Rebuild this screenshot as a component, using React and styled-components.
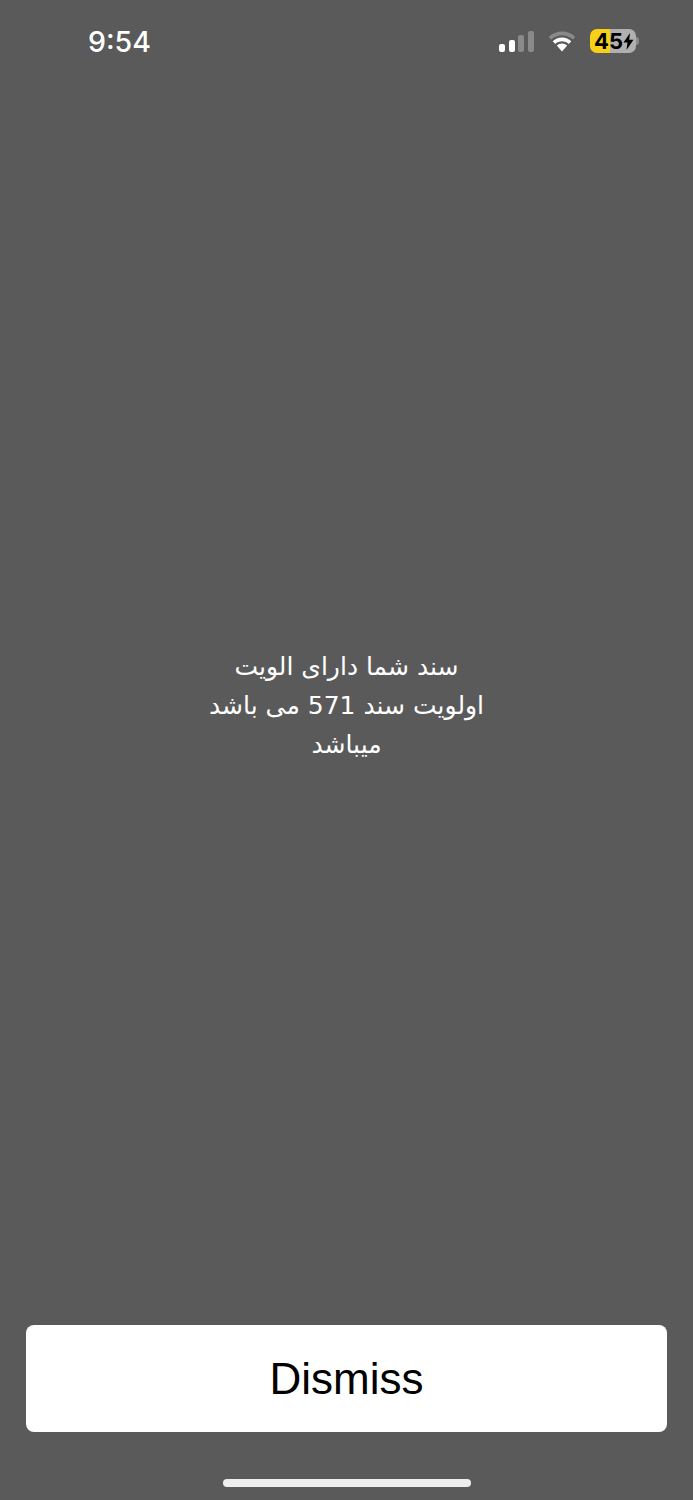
import styled, { createGlobalStyle } from "styled-components";

const GlobalStyle = createGlobalStyle`
  html, body {
    margin: 0;
    padding: 0;
    background-color: #5a5a5a;
  }
`;

const signalBars = [
  { height: 8, on: true },
  { height: 12, on: true },
  { height: 17, on: false },
  { height: 21, on: false },
];

const App = () => {
  return (
    <Wrapper>
      <GlobalStyle />
      <StatusBar>
        <Time>9:54</Time>
        <StatusIcons>
          <Signal>
            {signalBars.map((bar) => (
              <SignalBar key={bar.height} $height={bar.height} $on={bar.on} />
            ))}
          </Signal>
          <WifiIcon />
          <Battery>
            <BatteryLevel>45</BatteryLevel>
            <BoltIcon />
            <BatteryNub />
          </Battery>
        </StatusIcons>
      </StatusBar>
      <MessageWrapper>
        <Message dir="rtl">
          سند شما دارای الویت
          <br />
          اولویت سند 571 می باشد
          <br />
          میباشد
        </Message>
      </MessageWrapper>
      <DismissButton>Dismiss</DismissButton>
      <HomeIndicator />
    </Wrapper>
  );
};

const WifiIcon = () => (
  <WifiSvg viewBox="0 0 30 21" aria-hidden="true">
    <path
      d="M15 4.2c4.2 0 8 1.6 10.9 4.3l2.4-2.6C24.800 2.600 20.100 0.600 15 0.600S5.200 2.600 1.700 5.900l2.400 2.600C7 5.800 10.800 4.200 15 4.200z"
      fill="#8a8a8a"
    />
    <path
      d="M15 10.200c2.600 0 5 1 6.800 2.700l2.500-2.700C21.800 7.900 18.600 6.500 15 6.500s-6.800 1.400-9.300 3.700l2.500 2.700c1.800-1.700 4.200-2.700 6.800-2.700z"
      fill="#fff"
    />
    <path
      d="M15 12.400c-2 0-3.800.8-5.200 2.100L15 20.400l5.200-5.900c-1.400-1.300-3.200-2.100-5.200-2.100z"
      fill="#fff"
    />
  </WifiSvg>
);

const BoltIcon = () => (
  <BoltSvg viewBox="0 0 11 17" aria-hidden="true">
    <path d="M7 0 0.500 9.500H4.500L3.500 17 10.500 6.800H6.200L7 0z" fill="#000" />
  </BoltSvg>
);

export default App;

const Wrapper = styled.div`
  height: 1500px;
  display: flex;
  flex-direction: column;
  box-sizing: border-box;
  overflow: hidden;
  background-color: #5a5a5a;
`;

const StatusBar = styled.div`
  height: 82px;
  flex-shrink: 0;
  display: flex;
  align-items: center;
  justify-content: space-between;
  padding-left: 88px;
  padding-right: 57px;
`;

const Time = styled.div`
  padding-top: 2px;
  font-family: "Inter", "Liberation Sans", sans-serif;
  font-size: 28.5px;
  font-weight: 500;
  line-height: 80px;
  color: #fff;
`;

const StatusIcons = styled.div`
  display: flex;
  align-items: center;
`;

const Signal = styled.div`
  width: 35px;
  height: 21px;
  display: flex;
  align-items: flex-end;
  justify-content: space-between;
  margin-right: 13px;
`;

const SignalBar = styled.div`
  width: 6px;
  height: ${({ $height }) => $height}px;
  border-radius: 2px;
  background-color: ${({ $on }) => ($on ? "#fff" : "#8a8a8a")};
`;

const WifiSvg = styled.svg`
  width: 30px;
  height: 21px;
  margin-right: 13px;
`;

const Battery = styled.div`
  position: relative;
  width: 46px;
  height: 24px;
  display: flex;
  align-items: center;
  padding-left: 4px;
  box-sizing: border-box;
  border-radius: 7px;
  background: linear-gradient(to right, #f7d117 0 20px, #b0b0b0 20px 100%);
`;

const BatteryLevel = styled.span`
  font-family: "Inter", "Liberation Sans", sans-serif;
  font-size: 22px;
  font-weight: 700;
  line-height: 24px;
  color: #000;
`;

const BoltSvg = styled.svg`
  width: 11px;
  height: 17px;
`;

const BatteryNub = styled.div`
  position: absolute;
  top: 8px;
  right: -3px;
  width: 3px;
  height: 8px;
  border-radius: 0 3px 3px 0;
  background-color: #8a8a8a;
`;

const MessageWrapper = styled.div`
  height: 1243px;
  flex-shrink: 0;
  display: flex;
  align-items: center;
  justify-content: center;
  box-sizing: border-box;
  padding-top: 4px;
`;

const Message = styled.div`
  font-family: "DejaVu Sans", sans-serif;
  font-size: 25px;
  line-height: 39px;
  text-align: center;
  color: #fff;
`;

const DismissButton = styled.button`
  height: 107px;
  flex-shrink: 0;
  margin-left: 26px;
  margin-right: 26px;
  border: none;
  border-radius: 8px;
  padding: 0;
  font-family: "Liberation Sans", Arial, sans-serif;
  font-size: 44px;
  color: #000;
  background-color: #fff;
`;

const HomeIndicator = styled.div`
  width: 248px;
  height: 8px;
  flex-shrink: 0;
  align-self: center;
  margin-top: 47px;
  border-radius: 4px;
  background-color: #eeeeee;
`;
